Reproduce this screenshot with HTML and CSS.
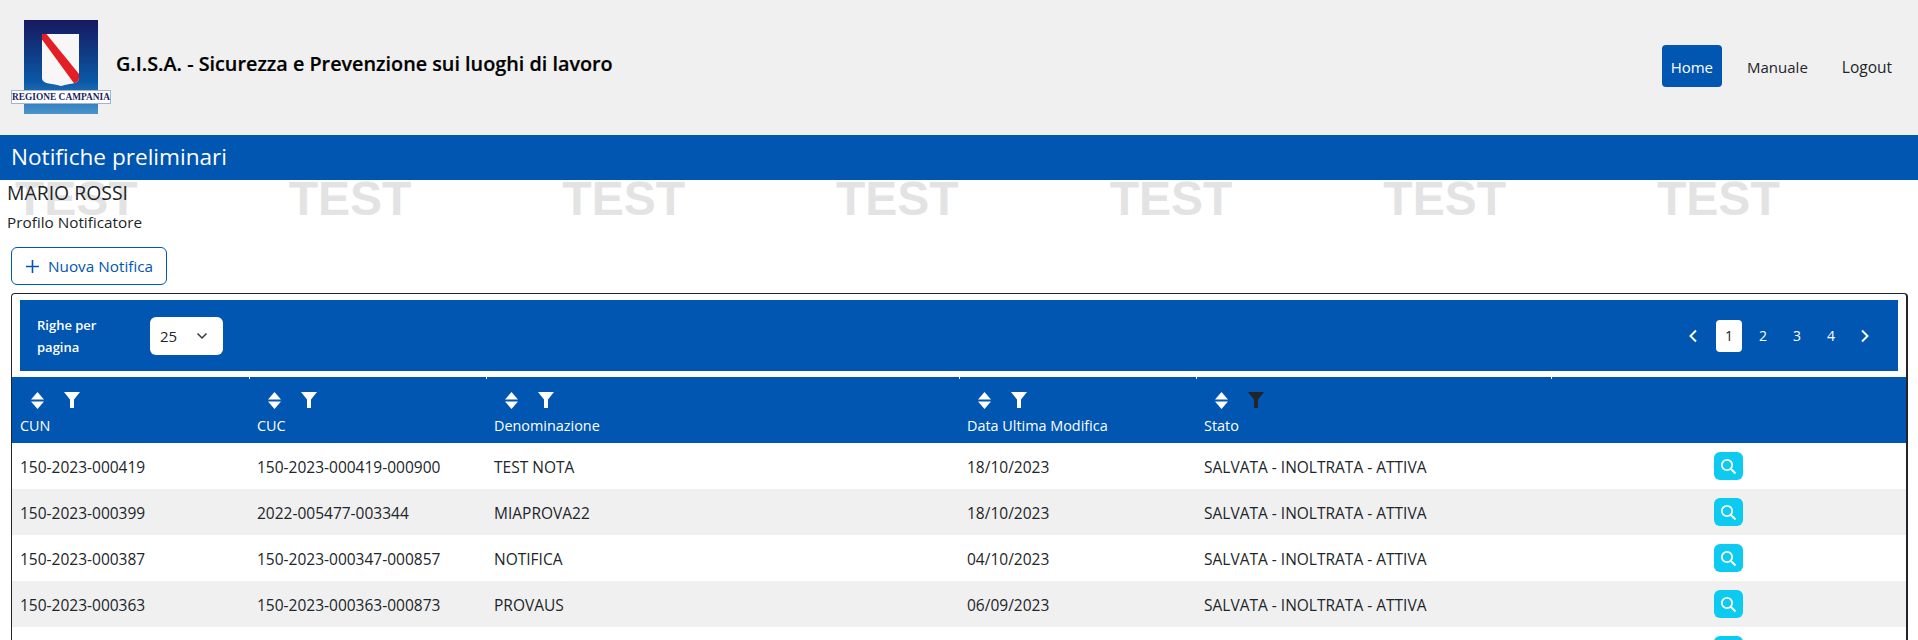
FILE: index.html
```html
<!DOCTYPE html>
<html lang="en">
<head>
  <meta charset="UTF-8">
  <title>G.I.S.A. - Notifiche preliminari</title>
  <link rel="stylesheet" href="styles.css">
</head>
<body>

<header class="topbar">
  <div class="logo">
    <svg class="logo-flag" width="74" height="94" viewBox="0 0 74 94">
      <defs>
        <linearGradient id="flagBlue" x1="0" y1="0" x2="0" y2="1">
          <stop offset="0" stop-color="#16195f"/>
          <stop offset="0.65" stop-color="#0a58a6"/>
          <stop offset="1" stop-color="#4a94cc"/>
        </linearGradient>
        <clipPath id="shield">
          <path d="M18 14H55V58C55 64 48 63 37 66C26 63 18 64 18 58Z"/>
        </clipPath>
      </defs>
      <rect width="74" height="94" fill="url(#flagBlue)"/>
      <path d="M18 14H55V58C55 64 48 63 37 66C26 63 18 64 18 58Z" fill="#f7f7f7"/>
      <path d="M14 14L20 11L60 60L52 66Z" fill="#e31e24" clip-path="url(#shield)"/>
    </svg>
    <span class="logo-label">REGIONE CAMPANIA</span>
  </div>
  <div class="app-title">G.I.S.A. - Sicurezza e Prevenzione sui luoghi di lavoro</div>
  <nav class="menu">
    <a class="menu-item active">Home</a>
    <a class="menu-item">Manuale</a>
    <a class="menu-item">Logout</a>
  </nav>
</header>

<div class="page-title">Notifiche preliminari</div>

<main class="content">
  <div class="watermark">
    <span>TEST</span><span>TEST</span><span>TEST</span><span>TEST</span><span>TEST</span><span>TEST</span><span>TEST</span>
  </div>

  <div class="user-name">MARIO ROSSI</div>
  <div class="user-profile">Profilo Notificatore</div>

  <button class="new-button">
    <svg width="15" height="15" viewBox="0 0 15 15"><path d="M7.5 1V14M1 7.5H14" stroke="#0056b0" stroke-width="1.6" fill="none"/></svg>
    Nuova Notifica
  </button>

  <section class="table-box">
    <div class="toolbar">
      <div class="rows-label">Righe per<br>pagina</div>
      <div class="rows-select">
        <span>25</span>
        <svg width="12" height="8" viewBox="0 0 12 8"><path d="M1.5 1.5L6 6L10.5 1.5" stroke="#343a40" stroke-width="1.5" fill="none"/></svg>
      </div>
      <div class="pager">
        <svg class="pager-arrow prev" width="10" height="14" viewBox="0 0 10 14"><path d="M8 1.5L2.5 7L8 12.5" stroke="#fff" stroke-width="2" fill="none"/></svg>
        <span class="page current">1</span>
        <span class="page">2</span>
        <span class="page">3</span>
        <span class="page">4</span>
        <svg class="pager-arrow next" width="10" height="14" viewBox="0 0 10 14"><path d="M2 1.5L7.5 7L2 12.5" stroke="#fff" stroke-width="2" fill="none"/></svg>
      </div>
    </div>

    <table class="grid">
      <colgroup>
        <col class="col-a"><col class="col-a"><col class="col-b"><col class="col-a"><col class="col-c"><col>
      </colgroup>
      <thead>
        <tr>
          <th>
            <div class="head-icons">
              <svg class="sort" width="13" height="17" viewBox="0 0 13 17"><path d="M6.5 0L13 7.5H0ZM0 9.5H13L6.5 17Z" fill="#fff"/></svg>
              <svg class="filter" width="16" height="16" viewBox="0 0 16 16"><path d="M0 0H16L10 7.5V16H6V7.5Z" fill="#fff"/></svg>
            </div>
            CUN
          </th>
          <th>
            <div class="head-icons">
              <svg class="sort" width="13" height="17" viewBox="0 0 13 17"><path d="M6.5 0L13 7.5H0ZM0 9.5H13L6.5 17Z" fill="#fff"/></svg>
              <svg class="filter" width="16" height="16" viewBox="0 0 16 16"><path d="M0 0H16L10 7.5V16H6V7.5Z" fill="#fff"/></svg>
            </div>
            CUC
          </th>
          <th>
            <div class="head-icons">
              <svg class="sort" width="13" height="17" viewBox="0 0 13 17"><path d="M6.5 0L13 7.5H0ZM0 9.5H13L6.5 17Z" fill="#fff"/></svg>
              <svg class="filter" width="16" height="16" viewBox="0 0 16 16"><path d="M0 0H16L10 7.5V16H6V7.5Z" fill="#fff"/></svg>
            </div>
            Denominazione
          </th>
          <th>
            <div class="head-icons">
              <svg class="sort" width="13" height="17" viewBox="0 0 13 17"><path d="M6.5 0L13 7.5H0ZM0 9.5H13L6.5 17Z" fill="#fff"/></svg>
              <svg class="filter" width="16" height="16" viewBox="0 0 16 16"><path d="M0 0H16L10 7.5V16H6V7.5Z" fill="#fff"/></svg>
            </div>
            Data Ultima Modifica
          </th>
          <th>
            <div class="head-icons">
              <svg class="sort" width="13" height="17" viewBox="0 0 13 17"><path d="M6.5 0L13 7.5H0ZM0 9.5H13L6.5 17Z" fill="#fff"/></svg>
              <svg class="filter" width="16" height="16" viewBox="0 0 16 16"><path d="M0 0H16L10 7.5V16H6V7.5Z" fill="#212529"/></svg>
            </div>
            Stato
          </th>
          <th></th>
        </tr>
      </thead>
      <tbody>
        <tr>
          <td>150-2023-000419</td><td>150-2023-000419-000900</td><td>TEST NOTA</td><td>18/10/2023</td><td>SALVATA - INOLTRATA - ATTIVA</td>
          <td class="action"><button class="view-button"><svg width="17" height="17" viewBox="0 0 17 17"><circle cx="7" cy="7" r="5.2" stroke="#fff" stroke-width="1.8" fill="none"/><path d="M11 11L15.5 15.5" stroke="#fff" stroke-width="2" fill="none"/></svg></button></td>
        </tr>
        <tr>
          <td>150-2023-000399</td><td>2022-005477-003344</td><td>MIAPROVA22</td><td>18/10/2023</td><td>SALVATA - INOLTRATA - ATTIVA</td>
          <td class="action"><button class="view-button"><svg width="17" height="17" viewBox="0 0 17 17"><circle cx="7" cy="7" r="5.2" stroke="#fff" stroke-width="1.8" fill="none"/><path d="M11 11L15.5 15.5" stroke="#fff" stroke-width="2" fill="none"/></svg></button></td>
        </tr>
        <tr>
          <td>150-2023-000387</td><td>150-2023-000347-000857</td><td>NOTIFICA</td><td>04/10/2023</td><td>SALVATA - INOLTRATA - ATTIVA</td>
          <td class="action"><button class="view-button"><svg width="17" height="17" viewBox="0 0 17 17"><circle cx="7" cy="7" r="5.2" stroke="#fff" stroke-width="1.8" fill="none"/><path d="M11 11L15.5 15.5" stroke="#fff" stroke-width="2" fill="none"/></svg></button></td>
        </tr>
        <tr>
          <td>150-2023-000363</td><td>150-2023-000363-000873</td><td>PROVAUS</td><td>06/09/2023</td><td>SALVATA - INOLTRATA - ATTIVA</td>
          <td class="action"><button class="view-button"><svg width="17" height="17" viewBox="0 0 17 17"><circle cx="7" cy="7" r="5.2" stroke="#fff" stroke-width="1.8" fill="none"/><path d="M11 11L15.5 15.5" stroke="#fff" stroke-width="2" fill="none"/></svg></button></td>
        </tr>
        <tr>
          <td></td><td></td><td></td><td></td><td></td>
          <td class="action"><button class="view-button"><svg width="17" height="17" viewBox="0 0 17 17"><circle cx="7" cy="7" r="5.2" stroke="#fff" stroke-width="1.8" fill="none"/><path d="M11 11L15.5 15.5" stroke="#fff" stroke-width="2" fill="none"/></svg></button></td>
        </tr>
      </tbody>
    </table>
  </section>
</main>

</body>
</html>
```

FILE: styles.css
```css
html, body {
  height: 640px;
  overflow: hidden;
}

body {
  font-family: 'Open Sans', 'Noto Sans', sans-serif;
  margin: 0;
  padding: 0;
  background-color: #fff;
  color: #212529;
  font-size: 15.5px;
}

.topbar {
  height: 135px;
  background-color: #f0f0f0;
  display: flex;
  align-items: center;
  padding: 0 17px 0 11px;
  box-sizing: border-box;
}

.logo {
  width: 100px;
  height: 94px;
  position: relative;
  display: flex;
  justify-content: center;
  margin-top: -1px;
}

.logo-label {
  position: absolute;
  left: 0;
  right: 0;
  top: 70px;
  height: 14px;
  line-height: 13px;
  background: #fff;
  border: 1px solid #9db4d6;
  box-sizing: border-box;
  color: #1a1f5e;
  font-family: 'Liberation Serif', serif;
  font-size: 9.4px;
  font-weight: bold;
  text-align: center;
  white-space: nowrap;
}

.app-title {
  margin-left: 5px;
  margin-top: -8px;
  font-size: 19.8px;
  font-weight: 600;
  color: #000;
  -webkit-text-stroke: 0.2px #000;
}

.menu {
  margin-left: auto;
  display: flex;
  align-items: center;
  margin-top: -4px;
  gap: 16px;
}

.menu-item {
  padding: 0 9px;
  height: 42px;
  line-height: 44px;
  border-radius: 4px;
  font-size: 15px;
}

.menu-item:last-child {
  font-size: 15.5px;
}

.menu-item.active {
  background-color: #0056b0;
  color: #fff;
}

.page-title {
  height: 45px;
  line-height: 44px;
  background-color: #0056b0;
  color: #fff;
  font-size: 22.6px;
  padding-left: 11px;
}

.content {
  position: relative;
  padding-top: 1px;
}

.watermark {
  position: absolute;
  left: 15px;
  top: -1px;
  display: flex;
  gap: 151px;
  font-family: 'Liberation Sans', sans-serif;
  font-size: 48px;
  font-weight: bold;
  line-height: 40px;
  color: #e3e3e3;
  z-index: -1;
}

.user-name {
  font-size: 19.4px;
  line-height: 24px;
  margin-left: 7px;
}

.user-profile {
  font-size: 15.3px;
  line-height: 20px;
  margin: 7px 0 0 7px;
}

.new-button {
  display: flex;
  align-items: center;
  gap: 8px;
  margin: 15px 0 0 11px;
  width: 156px;
  height: 38px;
  padding: 0 0 0 13px;
  background: #fff;
  border: 1px solid #0056b0;
  border-radius: 6px;
  color: #0056b0;
  font-family: inherit;
  font-size: 15.3px;
  box-sizing: border-box;
}

.table-box {
  margin: 8px 0 0 11px;
  width: 1897px;
  box-sizing: border-box;
  border: 1px solid #212529;
  border-bottom: none;
  border-right-width: 2px;
  border-radius: 4px 4px 0 0;
  padding-top: 6px;
}

.toolbar {
  margin: 0 8px;
  height: 71px;
  background-color: #0056b0;
  display: flex;
  align-items: center;
  padding-left: 17px;
  color: #fff;
}

.rows-label {
  width: 113px;
  font-size: 13px;
  font-weight: 600;
  line-height: 22px;
}

.rows-select {
  width: 73px;
  height: 38px;
  background: #fff;
  border-radius: 6px;
  display: flex;
  align-items: center;
  justify-content: space-between;
  padding: 0 15px 0 10px;
  box-sizing: border-box;
  color: #212529;
  font-size: 15px;
}

.pager {
  margin-left: auto;
  display: flex;
  align-items: center;
  margin-right: 26px;
}

.pager-arrow {
  margin: 0 2px;
}

.pager-arrow.prev {
  margin-right: 14px;
}

.pager-arrow.next {
  margin-left: 12px;
}

.page {
  width: 26px;
  height: 32px;
  line-height: 32px;
  margin: 0 4px;
  text-align: center;
  border-radius: 4px;
  font-size: 14px;
}

.page.current {
  background: #fff;
  color: #212529;
}

.grid {
  margin-top: 6px;
  width: 100%;
  border-collapse: collapse;
  table-layout: fixed;
}

.col-a {
  width: 237px;
}

.col-b {
  width: 473px;
}

.col-c {
  width: 355px;
}

.grid th {
  position: relative;
  height: 66px;
  background-color: #0056b0;
  color: #fff;
  font-size: 14.4px;
  font-weight: normal;
  text-align: left;
  padding: 0 0 6px 8px;
  box-sizing: border-box;
  vertical-align: bottom;
  line-height: 22px;
}

.grid th + th::before {
  content: '';
  position: absolute;
  left: 0;
  top: 0;
  width: 1px;
  height: 2px;
  background: #fff;
}

.head-icons {
  display: flex;
  align-items: center;
  gap: 20px;
  padding: 0 0 3px 11px;
  height: 24px;
}

.grid td {
  height: 46px;
  padding: 2px 0 0 8px;
  box-sizing: border-box;
}

.grid tbody tr:nth-child(even) td {
  background-color: #f0f0f0;
}

.grid td.action {
  padding: 0;
}

.view-button {
  display: flex;
  align-items: center;
  justify-content: center;
  width: 29px;
  height: 28px;
  padding: 0;
  border: none;
  border-radius: 6px;
  background-color: #0dcaf0;
  margin-left: 163px;
}
```
